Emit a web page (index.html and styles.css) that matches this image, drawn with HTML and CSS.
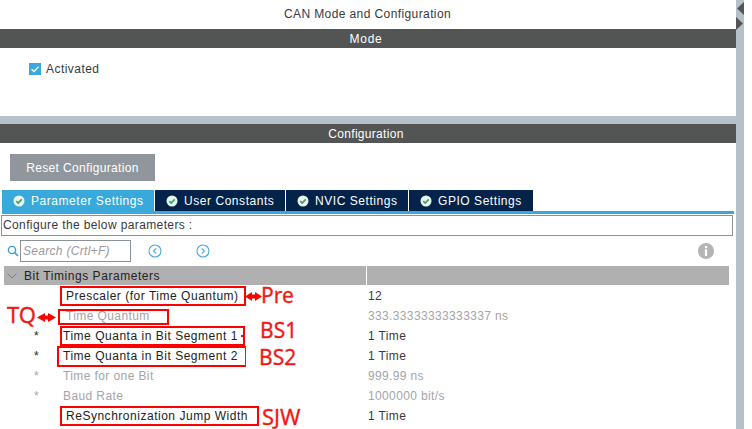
FILE: index.html
```html
<!DOCTYPE html>
<html lang="en">
<head>
<meta charset="utf-8">
<title>CAN Mode and Configuration</title>
<link rel="stylesheet" href="styles.css">
</head>
<body>
<div class="app">
  <main class="panel">
    <h1 class="title">CAN Mode and Configuration</h1>
    <h2 class="bar bar-mode">Mode</h2>
    <section class="mode">
      <label class="activated">
        <svg class="check" viewBox="0 0 12 12"><rect width="12" height="12" fill="#39a9dc"/><path d="M2.6 6.2 5 8.6 9.6 3.6" fill="none" stroke="#fff" stroke-width="1.4"/></svg>
        Activated
      </label>
    </section>
    <div class="divider"></div>
    <h2 class="bar">Configuration</h2>
    <section class="config">
      <button class="reset">Reset Configuration</button>
      <nav class="tabs">
        <div class="tab active"><svg class="ok" viewBox="0 0 12 12"><circle cx="6" cy="6" r="5.5" fill="#e8f4ee"/><path d="M3.3 6.1 5.2 8 8.7 4.4" fill="none" stroke="#3f9f68" stroke-width="1.7"/></svg>Parameter Settings</div>
        <div class="tab"><svg class="ok" viewBox="0 0 12 12"><circle cx="6" cy="6" r="5.5" fill="#e8f4ee"/><path d="M3.3 6.1 5.2 8 8.7 4.4" fill="none" stroke="#3f9f68" stroke-width="1.7"/></svg>User Constants</div>
        <div class="tab"><svg class="ok" viewBox="0 0 12 12"><circle cx="6" cy="6" r="5.5" fill="#e8f4ee"/><path d="M3.3 6.1 5.2 8 8.7 4.4" fill="none" stroke="#3f9f68" stroke-width="1.7"/></svg>NVIC Settings</div>
        <div class="tab"><svg class="ok" viewBox="0 0 12 12"><circle cx="6" cy="6" r="5.5" fill="#e8f4ee"/><path d="M3.3 6.1 5.2 8 8.7 4.4" fill="none" stroke="#3f9f68" stroke-width="1.7"/></svg>GPIO Settings</div>
      </nav>
      <div class="configure">Configure the below parameters :</div>
      <div class="tools">
        <svg class="glass" viewBox="0 0 12 12"><circle cx="5" cy="5" r="3.6" fill="none" stroke="#3b9fd8" stroke-width="1.4"/><path d="M7.6 7.6 11 11" stroke="#3b9fd8" stroke-width="1.6"/></svg>
        <div class="search">Search (Crtl+F)</div>
        <svg class="nav" viewBox="0 0 14 14"><circle cx="7" cy="7" r="6" fill="none" stroke="#4aa8dc" stroke-width="1.1"/><path d="M8.2 4.4 5.6 7l2.6 2.6" fill="none" stroke="#4aa8dc" stroke-width="1.1"/></svg>
        <svg class="nav next" viewBox="0 0 14 14"><circle cx="7" cy="7" r="6" fill="none" stroke="#4aa8dc" stroke-width="1.1"/><path d="M5.8 4.4 8.4 7l-2.6 2.6" fill="none" stroke="#4aa8dc" stroke-width="1.1"/></svg>
        <svg class="info" viewBox="0 0 16 16"><circle cx="8" cy="8" r="8" fill="#b4b4b4"/><rect x="6.9" y="3" width="2.2" height="2.2" fill="#fff"/><rect x="6.9" y="6.4" width="2.2" height="6.6" fill="#fff"/></svg>
      </div>
      <div class="table">
        <div class="thead">
          <div class="th-name"><svg class="chev" viewBox="0 0 10 6"><path d="M.5.5 5 5 9.500.5" fill="none" stroke="#7d7d7d" stroke-width="1"/></svg>Bit Timings Parameters</div>
          <div class="th-value"></div>
        </div>
        <div class="row"><span class="star"></span><span class="name indent">Prescaler (for Time Quantum)</span><span class="value">12</span></div>
        <div class="row dim"><span class="star"></span><span class="name indent">Time Quantum</span><span class="value">333.33333333333337 ns</span></div>
        <div class="row"><span class="star">*</span><span class="name">Time Quanta in Bit Segment 1</span><span class="value">1 Time</span></div>
        <div class="row"><span class="star">*</span><span class="name">Time Quanta in Bit Segment 2</span><span class="value">1 Time</span></div>
        <div class="row dim"><span class="star">*</span><span class="name">Time for one Bit</span><span class="value">999.99 ns</span></div>
        <div class="row dim"><span class="star">*</span><span class="name">Baud Rate</span><span class="value">1000000 bit/s</span></div>
        <div class="row"><span class="star"></span><span class="name indent">ReSynchronization Jump Width</span><span class="value">1 Time</span></div>
      </div>
    </section>

    <div class="box box-pre"></div>
    <div class="box box-tq"></div>
    <div class="box box-bs2"></div>
    <div class="box box-bs1"></div>
    <div class="box box-sjw"></div>
    <div class="tick"></div>
    <svg class="arrow arrow-pre" viewBox="0 0 17 9"><path d="M0 4.500 7 0V2.500h3V0l7 4.500-7 4.500V6.500H7V9z" fill="#f00"/></svg>
    <svg class="arrow arrow-tq" viewBox="0 0 19 9"><path d="M0 4.500 8 0V2.500h3V0l8 4.500-8 4.500V6.500H8V9z" fill="#f00"/></svg>
    <span class="mark mark-pre">Pre</span>
    <span class="mark mark-tq">TQ</span>
    <span class="mark mark-bs1">BS1</span>
    <span class="mark mark-bs2">BS2</span>
    <span class="mark mark-sjw">SJW</span>
  </main>
  <aside class="gutter">
    <svg class="grip" viewBox="0 0 8 32"><path d="M8 2v13L1 8.500z" fill="#555"/><path d="M0 17v13l7-6.500z" fill="#555"/></svg>
  </aside>
</div>
</body>
</html>
```
FILE: styles.css
```css
* { box-sizing: border-box; }
html, body { margin: 0; height: 100%; background: #fff; overflow: hidden; }
body { font-family: "Liberation Sans", Arial, sans-serif; font-size: 12px; color: #39393f; }
.app { display: flex; width: 744px; height: 429px; }
.panel { position: relative; width: 736px; height: 429px; overflow: hidden; }
.gutter { width: 8px; background: #b6c1c7; }
.grip { display: block; width: 8px; height: 32px; }
.title { margin: 0; height: 29px; line-height: 29px; padding-right: 1px; font-size: 12px; font-weight: normal; text-align: center; letter-spacing: .4px; }
.bar { margin: 0; height: 19px; padding: 1px 4px 0 0; line-height: 19px; background: #535454; color: #fff; font-size: 12px; font-weight: normal; text-align: center; letter-spacing: .3px; }
.bar-mode { letter-spacing: .7px; }
.mode { height: 68px; padding: 15px 0 0 29px; }
.activated { display: flex; align-items: center; gap: 5px; height: 12px; letter-spacing: .45px; }
.check { width: 12px; height: 12px; }
.divider { height: 8px; background: #b6c1c7; }
.config { padding-top: 11px; }
.reset { display: block; width: 145px; height: 27px; margin: 0 0 9px 10px; padding: 0; border: 0; background: #90969b; color: #fff; font: 12px "Liberation Sans", Arial, sans-serif; letter-spacing: .35px; }
.tabs { display: flex; height: 24px; margin: 0 2px 0 2px; border-bottom: 3px solid #39a9dc; }
.tab { display: flex; align-items: center; gap: 6px; height: 21px; padding-left: 11px; background: #03234b; color: #fff; letter-spacing: .55px; border-right: 1px solid #fff; width: 131px; }
.tab.active { background: #39a9dc; width: 153px; }
.tab:nth-child(3) { width: 123px; }
.tab:nth-child(4) { width: 124px; border-right: 0; }
.ok { width: 12px; height: 12px; flex: none; }
.configure { height: 21px; margin: 1px 3px 0 1px; padding: 0 1px; line-height: 19px; border: 1px solid #8a9297; letter-spacing: .38px; }
.tools { display: flex; align-items: center; height: 22px; margin-top: 4px; position: relative; }
.glass { width: 12px; height: 12px; margin-left: 7px; }
.search { width: 111px; height: 22px; margin-left: 1px; padding-left: 2px; line-height: 20px; border: 1px solid #8a9297; color: #9a9aa0; font-style: italic; letter-spacing: .3px; }
.nav { width: 14px; height: 14px; margin-left: 17px; }
.nav.next { margin-left: 34px; }
.info { width: 16px; height: 16px; margin-left: auto; margin-right: 22px; }
.table { margin: 4px 7px 0 4px; }
.thead { display: flex; height: 19px; background: #b0b0b0; }
.th-name { display: flex; align-items: center; gap: 7px; width: 363px; padding-left: 3px; color: #222; letter-spacing: .55px; border-right: 1px solid #fff; }
.th-value { flex: 1; }
.chev { width: 10px; height: 6px; }
.row { display: flex; align-items: center; height: 20px; letter-spacing: .36px; }
.row:nth-child(2) { margin-top: 1px; }
.star { width: 59px; padding-left: 30px; color: #222; }
.name { width: 305px; letter-spacing: .52px; }
.dim .name { letter-spacing: .4px; }
.name.indent { padding-left: 3px; color: #222; }
.row:not(.dim) .name { color: #222; }
.value { flex: 1; }
.dim, .dim .star, .row.dim .name { color: #a4a4aa; }
.box { position: absolute; border: 2px solid #f00; }
.box-pre { left: 60px; top: 286px; width: 186px; height: 20px; }
.box-tq { left: 58px; top: 309px; width: 111px; height: 16px; }
.box-bs1 { left: 60px; top: 326px; width: 185px; height: 20px; }
.box-bs2 { left: 57px; top: 346px; width: 189px; height: 21px; border-right-width: 1px; border-right-color: #c22; }
.box-sjw { left: 60px; top: 406px; width: 199px; height: 20px; }
.tick { position: absolute; left: 241px; top: 335px; width: 3px; height: 2px; background: #f00; }
.arrow { position: absolute; }
.arrow-pre { left: 245px; top: 292px; width: 17px; height: 9px; }
.arrow-tq { left: 37px; top: 313px; width: 19px; height: 9px; }
.mark { position: absolute; color: #f21818; font-family: "Noto Sans", sans-serif; font-size: 21px; line-height: 20px; -webkit-text-stroke: .3px #f21818; }
.mark-pre { left: 261px; top: 285px; }
.mark-tq { left: 7px; top: 304px; font-size: 22px; }
.mark-bs1 { left: 260px; top: 320px; }
.mark-bs2 { left: 259px; top: 347px; }
.mark-sjw { left: 262px; top: 406px; font-size: 22px; }
```
